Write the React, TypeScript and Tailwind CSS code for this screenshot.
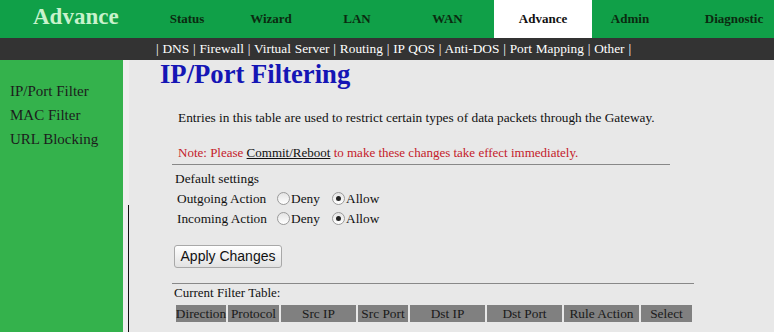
import React from "react";

const serif = { fontFamily: '"Liberation Serif", "Times New Roman", serif' };

function Radio({ checked }: { checked?: boolean }) {
  return (
    <span className="inline-flex items-center justify-center w-[13px] h-[13px] rounded-full border border-[#9a9a9a] bg-gradient-to-b from-[#e4e4e4] to-white">
      {checked && <span className="w-[5px] h-[5px] rounded-full bg-[#222]" />}
    </span>
  );
}

const navs: { label: string; w: string; active?: boolean }[] = [
  { label: "Status", w: "w-[84px]" },
  { label: "Wizard", w: "w-[84px]" },
  { label: "LAN", w: "w-[88px]" },
  { label: "WAN", w: "w-[93px]" },
  { label: "Advance", w: "w-[98px]", active: true },
  { label: "Admin", w: "w-[76px]" },
  { label: "Diagnostic", w: "w-[106px]" },
];

const cols: { label: string; w: string }[] = [
  { label: "Direction", w: "w-[50px]" },
  { label: "Protocol", w: "w-[51px]" },
  { label: "Src IP", w: "w-[75px]" },
  { label: "Src Port", w: "w-[50px]" },
  { label: "Dst IP", w: "w-[75px]" },
  { label: "Dst Port", w: "w-[75px]" },
  { label: "Rule Action", w: "w-[75px]" },
  { label: "Select", w: "w-[51px]" },
];

export default function App() {
  return (
    <div className="w-[774px] h-[332px] overflow-hidden bg-[#e8e8e8] flex flex-col" style={serif}>
      <div className="h-[38px] bg-[#10a048] flex items-stretch">
        <div className="w-[145px] flex items-center pl-[33px] text-[23px] font-bold text-[#c8f2cc] leading-none pb-[6px]">
          Advance
        </div>
        {navs.map((n) => (
          <div
            key={n.label}
            className={`${n.w} flex items-center justify-center text-[13px] font-bold ${
              n.active ? "bg-white text-[#111]" : "text-[#0b2a10]"
            } ${n.label === "Diagnostic" ? "pl-[26px]" : ""}`}
          >
            {n.label}
          </div>
        ))}
      </div>
      <div className="h-[22px] bg-[#333333] flex items-center justify-center text-white text-[13.33px] pl-[13px] [word-spacing:0.5px]">
        | DNS | Firewall | Virtual Server | Routing | IP QOS | Anti-DOS | Port Mapping | Other |
      </div>
      <div className="flex flex-1">
        <div className="w-[123px] bg-[#34b24c] pt-[19px] pl-[10px] text-[15px] text-[#1c1c1c] leading-[24px]">
          <div>IP/Port Filter</div>
          <div>MAC Filter</div>
          <div>URL Blocking</div>
        </div>
        <div className="w-[6px] flex flex-col bg-[#eeeeee]">
          <div className="h-[145px]" />
          <div className="flex-1 border-r border-[#111]" />
        </div>
        <div className="flex-1 flex flex-col text-[13.33px] text-[#111]">
          <div className="ml-[31px] -mt-[1px] text-[26.67px] font-bold text-[#1515b5] leading-[30px]">
            IP/Port Filtering
          </div>
          <div className="ml-[49px] mt-[21px] leading-[16px]">
            Entries in this table are used to restrict certain types of data packets through the Gateway.
          </div>
          <div className="ml-[49px] mt-[19px] leading-[16px] text-[13px] text-[#c4202a]">
            Note: Please <span className="text-[#111] underline">Commit/Reboot</span> to make these changes take effect immediately.
          </div>
          <div className="ml-[43px] mt-[3px] w-[498px] h-[1px] bg-[#888]" />
          <div className="ml-[46px] mt-[6px] leading-[16px]">Default settings</div>
          <div className="ml-[48px] mt-[3px] leading-[17px] flex items-center">
            <span className="w-[100px]">Outgoing Action</span>
            <Radio />
            <span className="ml-[1px] w-[41px]">Deny</span>
            <Radio checked />
            <span className="ml-[1px]">Allow</span>
          </div>
          <div className="ml-[48px] mt-[3px] leading-[17px] flex items-center">
            <span className="w-[100px]">Incoming Action</span>
            <Radio />
            <span className="ml-[1px] w-[41px]">Deny</span>
            <Radio checked />
            <span className="ml-[1px]">Allow</span>
          </div>
          <div className="ml-[45px] mt-[18px]">
            <button
              className="w-[108px] h-[23px] rounded-[3px] border border-[#a8a8a8] bg-gradient-to-b from-white to-[#e2e2e2] text-[14px] text-[#111] flex items-center justify-center"
              style={{ fontFamily: '"Liberation Sans", Arial, sans-serif' }}
            >
              Apply Changes
            </button>
          </div>
          <div className="ml-[43px] mt-[15px] w-[522px] h-[1px] bg-[#888]" />
          <div className="ml-[45px] mt-[1px] text-[13px] leading-[16px]">Current Filter Table:</div>
          <div className="ml-[47px] mt-[4px] flex gap-[2px]">
            {cols.map((c) => (
              <div
                key={c.label}
                className={`${c.w} h-[17px] bg-[#808080] flex items-center justify-center text-[13.33px] text-[#1a1a1a] whitespace-nowrap`}
              >
                {c.label}
              </div>
            ))}
          </div>
        </div>
      </div>
    </div>
  );
}
